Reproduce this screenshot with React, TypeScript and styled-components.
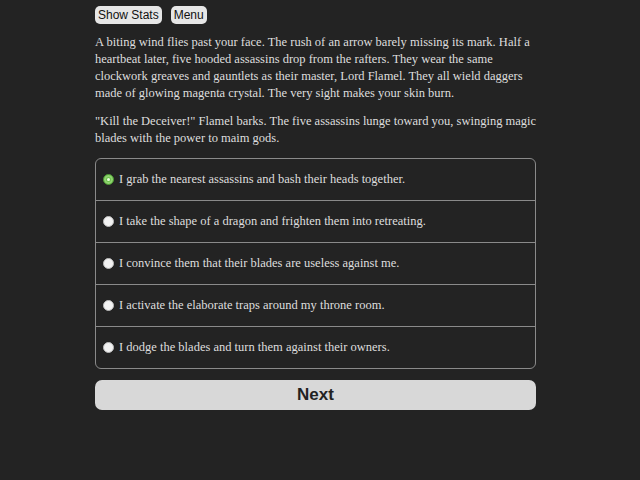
import * as React from 'react';
import { useState } from 'react';
import styled, { createGlobalStyle } from 'styled-components';

const GlobalStyle = createGlobalStyle`
  html, body {
    margin: 0;
    background: #232323;
  }
`;

const Page = styled.div`
  width: 441px;
  margin-left: 95px;
  padding-top: 6px;
  color: #dedede;
  font-family: "Liberation Serif", "DejaVu Serif", serif;
`;

const Toolbar = styled.div`
  display: flex;
  gap: 9px;
`;

const ToolButton = styled.button`
  font-family: "Liberation Sans", Arial, sans-serif;
  font-size: 12px;
  color: #111;
  background: #e6e6e6;
  border: none;
  border-radius: 5px;
  height: 18px;
  padding: 0 3px;
  line-height: 18px;
`;

const Story = styled.p<{ $gap: number }>`
  font-size: 12.5px;
  line-height: 17px;
  margin: ${(p) => p.$gap}px 0 0;
  white-space: nowrap;
`;

const Choices = styled.div`
  margin-top: 11px;
  border: 1px solid #8a8a8a;
  border-radius: 6px;
  display: flex;
  flex-direction: column;
`;

const Choice = styled.label`
  display: flex;
  align-items: center;
  gap: 5px;
  height: 41px;
  padding-left: 7px;
  font-size: 12.5px;
  cursor: pointer;
  & + & {
    border-top: 1px solid #8a8a8a;
  }
`;

const Radio = styled.span<{ $checked: boolean }>`
  width: 9px;
  height: 9px;
  border-radius: 50%;
  background: ${(p) => (p.$checked ? '#6cbf4d' : '#f2f2f2')};
  border: 1px solid ${(p) => (p.$checked ? '#4f9a35' : '#bbb')};
  box-shadow: ${(p) => (p.$checked ? 'inset 0 0 0 2px #8fd46f' : 'none')};
  display: flex;
  align-items: center;
  justify-content: center;
  &::after {
    content: '';
    width: 3px;
    height: 3px;
    border-radius: 50%;
    background: ${(p) => (p.$checked ? '#eaffdf' : 'transparent')};
  }
`;

const NextButton = styled.button`
  width: 100%;
  margin-top: 11px;
  height: 30px;
  border: none;
  border-radius: 7px;
  background: #d8d8d8;
  color: #222;
  font-family: "Liberation Sans", Arial, sans-serif;
  font-weight: bold;
  font-size: 17px;
`;

const options = [
  'I grab the nearest assassins and bash their heads together.',
  'I take the shape of a dragon and frighten them into retreating.',
  'I convince them that their blades are useless against me.',
  'I activate the elaborate traps around my throne room.',
  'I dodge the blades and turn them against their owners.',
];

const App = () => {
  const [picked, setPicked] = useState(0);

  return (
    <Page>
      <GlobalStyle />
      <Toolbar>
        <ToolButton>Show Stats</ToolButton>
        <ToolButton>Menu</ToolButton>
      </Toolbar>
      <Story $gap={10}>
        A biting wind flies past your face. The rush of an arrow barely missing its mark. Half a<br />
        heartbeat later, five hooded assassins drop from the rafters. They wear the same<br />
        clockwork greaves and gauntlets as their master, Lord Flamel. They all wield daggers<br />
        made of glowing magenta crystal. The very sight makes your skin burn.
      </Story>
      <Story $gap={11}>
        "Kill the Deceiver!" Flamel barks. The five assassins lunge toward you, swinging magic<br />
        blades with the power to maim gods.
      </Story>
      <Choices>
        {options.map((text, i) => (
          <Choice key={text} onClick={() => setPicked(i)}>
            <Radio $checked={picked === i} />
            {text}
          </Choice>
        ))}
      </Choices>
      <NextButton>Next</NextButton>
    </Page>
  );
};

export default App;
